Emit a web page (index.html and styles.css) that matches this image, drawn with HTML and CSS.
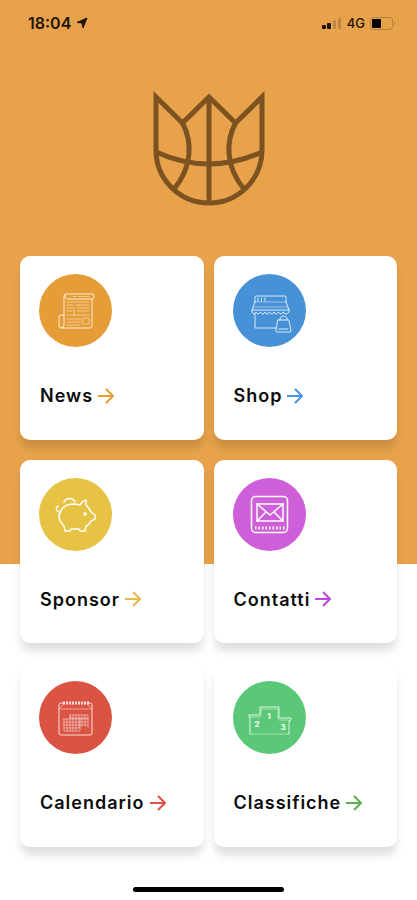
FILE: index.html
```html
<!DOCTYPE html>
<html lang="it">
<head>
  <meta charset="UTF-8">
  <meta name="viewport" content="width=device-width, initial-scale=1.0">
  <title>Basket App</title>
  <link rel="stylesheet" href="styles.css">
</head>
<body>
  <header class="status-bar">
    <div class="status-left">
      <span class="time">18:04</span>
      <svg width="12" height="12" viewBox="0 0 12 12" aria-hidden="true">
        <path d="M11 1 L7 11 L6 6 L1 5.500 Z" fill="#1f1508" stroke="#1f1508" stroke-linejoin="round"/>
      </svg>
    </div>
    <div class="status-right">
      <svg width="20" height="12" viewBox="0 0 20 12" aria-hidden="true">
        <rect x="0" y="8" width="4" height="4" rx="1" fill="#1f1508"/>
        <rect x="5" y="6" width="4" height="6" rx="1" fill="#1f1508"/>
        <rect x="11" y="3" width="3" height="9" rx="1" fill="#bd8544"/>
        <rect x="16" y="1" width="3" height="11" rx="1" fill="#bd8544"/>
      </svg>
      <span class="network">4G</span>
      <svg width="26" height="13" viewBox="0 0 26 13" aria-hidden="true">
        <rect x="0.500" y="0.500" width="22" height="12" rx="3" fill="none" stroke="#b57e3c"/>
        <rect x="2" y="2" width="9" height="9" rx="1" fill="#000"/>
        <path d="M24 4 Q26.500 6.500 24 9 Z" fill="#b57e3c"/>
      </svg>
    </div>
  </header>

  <main>
    <svg class="logo" width="118" height="120" viewBox="0 0 118 120" role="img" aria-label="Logo">
      <g fill="none" stroke="#7b5220" stroke-width="5" stroke-miterlimit="10">
        <path d="M6 62 V9 L32.500 35 L59 9 L85.500 35 L112 9 V62 A53 53 0 0 1 6 62 Z"/>
        <path d="M59 9 V115"/>
        <path d="M6 64 Q59 88 112 64"/>
        <path d="M32.500 35 C42 53 43 78 24 101"/>
        <path d="M85.500 35 C76 53 75 78 94 101"/>
      </g>
    </svg>

    <nav class="cards">
      <a class="card news" href="#">
        <svg class="icon" viewBox="0 0 73 73" aria-hidden="true">
          <path d="M25 41 V22 Q25 20 27 20 H53 Q55 20 55 22.500 Q55 25 53 25 H29 Q26 25 26 21"/>
          <path d="M53 25 V52 Q53 54 51 54 H22 Q20 54 20 51 V43 Q20 41 22 41 H25 V51 Q25 54 22 54"/>
          <path class="thin" d="M34 22.500 H37 M39 22.500 H50 M28 28 H50 M28 31 H34 M37 31 H50 M28 34 H33 M28 37 H33 M35 33 V41 M38 34 H50 M38 37 H50 M28 41 H50 M28 45 H42 M28 48 H42 M28 51 H41 M44 44 H50 V50 H44 Z"/>
        </svg>
        <span class="label">News <svg class="arrow" viewBox="0 0 17 17" aria-hidden="true"><path d="M1 8 H16 M9 1 L16 8 L9 15"/></svg></span>
      </a>

      <a class="card shop" href="#">
        <svg class="icon" viewBox="0 0 73 73" aria-hidden="true">
          <path d="M22 28 V23 Q22 22 23 22 H52 Q53 22 53 23 V28 M22 28 L19 36 H56 L53 28"/>
          <path class="thin" d="M22 28 H53 M21 33 H55"/>
          <path d="M25 24 V27 M28.500 24 V27 M32 24 V27"/>
          <path d="M19 36 V38 Q21 42 23 38 Q25 42 27.500 38 Q30 42 32 38 Q34 42 36.500 38 Q39 42 41 38 Q43 42 45.500 38 Q48 42 50 38 Q53 42 56 38 V36"/>
          <path d="M22 40 V54 H43"/>
          <path d="M45 46 H56 L58 57 Q58 58 57 58 H44 Q43 58 43 57 Z M47 46 V44 Q50.500 40 54 44 V46 M46 55 H55"/>
        </svg>
        <span class="label">Shop <svg class="arrow" viewBox="0 0 17 17" aria-hidden="true"><path d="M1 8 H16 M9 1 L16 8 L9 15"/></svg></span>
      </a>

      <a class="card sponsor" href="#">
        <svg class="icon bold" viewBox="0 0 73 73" aria-hidden="true">
          <path d="M25 24 A6 6 0 0 1 36 24"/>
          <path d="M19 28 Q15 32 20 34"/>
          <path d="M41 27 Q43 23 47 22 V27 Q50 30 52 34 L56 37 V41 L52 43 Q50 47 47 48 L46 53 H41 L40 51 H32 L31 53 H26 L25 48 Q20 43 20 38 Q22 27 33 26 Q38 26 41 27"/>
          <circle cx="46" cy="36" r="1"/>
        </svg>
        <span class="label">Sponsor <svg class="arrow" viewBox="0 0 17 17" aria-hidden="true"><path d="M1 8 H16 M9 1 L16 8 L9 15"/></svg></span>
      </a>

      <a class="card contatti" href="#">
        <svg class="icon bold" viewBox="0 0 73 73" aria-hidden="true">
          <rect x="18.500" y="18.500" width="36" height="36" rx="4"/>
          <rect x="24" y="26" width="26" height="17"/>
          <path d="M24 26 L37 37 L50 26 M24 43 L33 34 M50 43 L41 34"/>
          <path d="M22 50 H52" stroke-width="3" stroke-dasharray="1.500 2" stroke-linecap="butt"/>
        </svg>
        <span class="label">Contatti <svg class="arrow" viewBox="0 0 17 17" aria-hidden="true"><path d="M1 8 H16 M9 1 L16 8 L9 15"/></svg></span>
      </a>

      <a class="card calendario" href="#">
        <svg class="icon" viewBox="0 0 73 73" aria-hidden="true">
          <path d="M24 22 H22 Q20 22 20 24 V52 Q20 54 22 54 H51 Q53 54 53 52 V24 Q53 22 51 22 H50"/>
          <path class="thin" d="M20 28 H53 M21 27 L25 23 M52 27 L48 23"/>
          <path d="M24 22 H50" stroke-width="3" stroke-dasharray="2 1" stroke-linecap="butt"/>
          <path class="thin" d="M31 34 H49 V46 M31 34 V37 H49 M25 38 V50 H41 V38 M24 38 H49 M24 41 H49 M24 44 H49 M25 47 H41 M28 38 V50 M31 35 V50 M34 34 V50 M37 34 V50 M40 34 V47 M43 34 V45 M46 34 V45"/>
        </svg>
        <span class="label">Calendario <svg class="arrow" viewBox="0 0 17 17" aria-hidden="true"><path d="M1 8 H16 M9 1 L16 8 L9 15"/></svg></span>
      </a>

      <a class="card classifiche" href="#">
        <svg class="icon" viewBox="0 0 73 73" aria-hidden="true">
          <path d="M17 53 V37 L16 36 V34 H27 V26 H46 V37 H58 V39 L56 40 V53"/>
          <path class="thin" d="M17 53 H56 M28 28 H45 M28 28 V35 M45 28 V38 M17 36 H27 M46 39 H56"/>
          <text x="24" y="46">2</text>
          <text x="36" y="38">1</text>
          <text x="50" y="49">3</text>
        </svg>
        <span class="label">Classifiche <svg class="arrow" viewBox="0 0 17 17" aria-hidden="true"><path d="M1 8 H16 M9 1 L16 8 L9 15"/></svg></span>
      </a>
    </nav>
  </main>

  <div class="home-indicator"></div>
</body>
</html>
```

FILE: styles.css
```css
* {
  box-sizing: border-box;
}
body {
  margin: 0;
  font-family: Inter, "Liberation Sans", sans-serif;
  background: linear-gradient(#e8a24b 564px, #fff 564px) no-repeat;
  color: #0c0c0c;
}
.status-bar {
  display: flex;
  justify-content: space-between;
  align-items: center;
  height: 46px;
  padding: 0 21px 0 28px;
  color: #1f1508;
}
.status-left, .status-right {
  display: flex;
  align-items: center;
  gap: 5px;
}
.time {
  font-size: 16px;
  font-weight: 600;
}
.network {
  font-size: 13px;
  font-weight: 500;
}
.logo {
  display: block;
  margin: 42px auto 48px;
}
.cards {
  display: grid;
  grid-template-columns: 1fr 1fr;
  gap: 20px 10px;
  padding: 0 20px;
}
.card {
  aspect-ratio: 1;
  padding: 18px 19px;
  border-radius: 10px;
  background: #fff;
  box-shadow: 0 9px 8px -1px rgba(0, 0, 0, 0.13);
  color: inherit;
  text-decoration: none;
}
.icon {
  display: block;
  width: 73px;
  height: 73px;
  border-radius: 50%;
  background: var(--color);
  fill: none;
  stroke: rgba(255, 255, 255, 0.8);
  stroke-width: 1;
  stroke-linecap: round;
  stroke-linejoin: round;
}
.icon.bold {
  stroke: #fff;
  stroke-width: 1.5;
}
.icon .thin {
  stroke: rgba(255, 255, 255, 0.45);
}
.icon text {
  fill: #fff;
  stroke: none;
  font-size: 8px;
  font-weight: 700;
  text-anchor: middle;
}
.label {
  display: flex;
  align-items: center;
  gap: 4px;
  margin-top: 37px;
  padding-left: 1px;
  font-size: 18px;
  font-weight: 600;
  line-height: 24px;
  letter-spacing: 1px;
}
.arrow {
  width: 17px;
  height: 17px;
  fill: none;
  stroke: var(--arrow);
  stroke-width: 2;
}
.news {
  --color: #e69d38;
  --arrow: #e69d38;
}
.shop {
  --color: #4792d6;
  --arrow: #4a94e6;
}
.sponsor {
  --color: #e6c344;
  --arrow: #e9b949;
}
.contatti {
  --color: #cf5fd9;
  --arrow: #bd47e0;
}
.calendario {
  --color: #db5443;
  --arrow: #db5443;
}
.classifiche {
  --color: #5bc878;
  --arrow: #5fae52;
}
.home-indicator {
  width: 36%;
  height: 5px;
  margin: 40px auto 8px;
  border-radius: 3px;
  background: #000;
}
```
